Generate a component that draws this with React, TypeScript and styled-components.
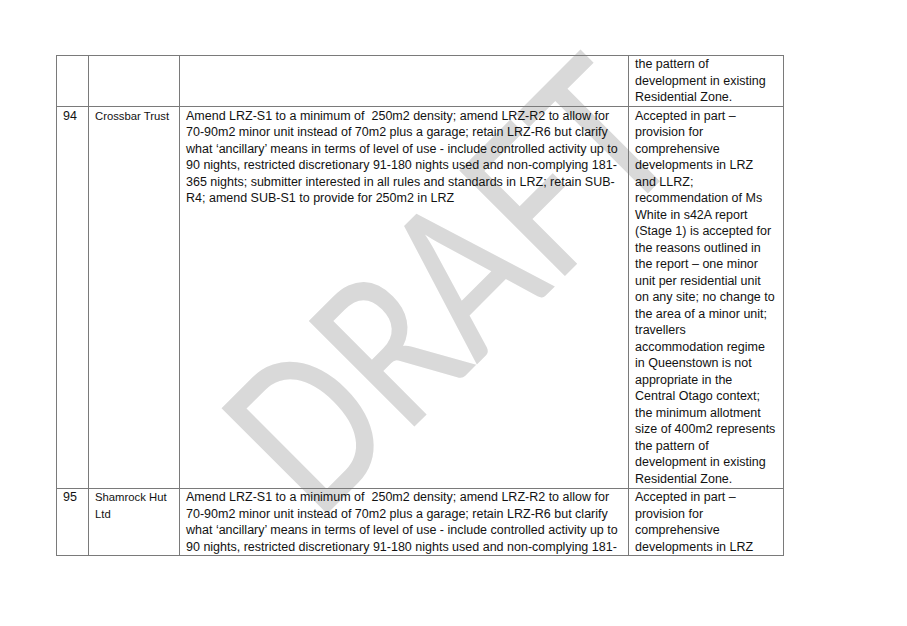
import React from "react";
import styled, { createGlobalStyle } from "styled-components";

const LINE = "#7a7a7a";

const GlobalStyle = createGlobalStyle`
  html, body {
    margin: 0;
    padding: 0;
    background: #ffffff;
  }
`;

const Page = styled.div`
  position: relative;
  width: 907px;
  height: 626px;
  box-sizing: border-box;
  padding: 55px 0 0 56px;
  overflow: hidden;
  background: #ffffff;
`;

// the grey DRAFT stamp lies under the table text, squeezed like a WordArt watermark
const Watermark = styled.div`
  position: absolute;
  left: 187px;
  top: 394px;
  transform-origin: 0 0;
  transform: rotate(-45deg) scaleX(0.78);
  font-family: Lato, "Open Sans", sans-serif;
  font-weight: 500;
  font-size: 208px;
  line-height: 1;
  color: #d9d9d9;
  white-space: nowrap;
  pointer-events: none;
  user-select: none;
`;

const Sheet = styled.div`
  position: relative;
  z-index: 1;
  display: grid;
  grid-template-columns: 32px 91px 449px 155px;
  width: 727px;
  border-top: 1px solid ${LINE};
  border-left: 1px solid ${LINE};
`;

const Cell = styled.div<{ $size?: number; $pad?: string }>`
  box-sizing: border-box;
  padding: ${p => p.$pad ?? "1px 4px 1px 6px"};
  border-right: 1px solid ${LINE};
  border-bottom: 1px solid ${LINE};
  font-family: "Liberation Sans", Arial, sans-serif;
  font-size: ${p => p.$size ?? 12.5}px;
  line-height: 16.5px;
  color: #121212;
  white-space: pre;
`;

type Row = {
  no: string;
  submitter: string[];
  request: string[];
  decision: string[];
  pad?: string;
};

const REQUEST = [
  "Amend LRZ-S1 to a minimum of  250m2 density; amend LRZ-R2 to allow for",
  "70-90m2 minor unit instead of 70m2 plus a garage; retain LRZ-R6 but clarify",
  "what \u2018ancillary\u2019 means in terms of level of use - include controlled activity up to",
  "90 nights, restricted discretionary 91-180 nights used and non-complying 181-",
  "365 nights; submitter interested in all rules and standards in LRZ; retain SUB-",
  "R4; amend SUB-S1 to provide for 250m2 in LRZ",
];

const DECISION = [
  "Accepted in part \u2013",
  "provision for",
  "comprehensive",
  "developments in LRZ",
  "and LLRZ;",
  "recommendation of Ms",
  "White in s42A report",
  "(Stage 1) is accepted for",
  "the reasons outlined in",
  "the report \u2013 one minor",
  "unit per residential unit",
  "on any site; no change to",
  "the area of a minor unit;",
  "travellers",
  "accommodation regime",
  "in Queenstown is not",
  "appropriate in the",
  "Central Otago context;",
  "the minimum allotment",
  "size of 400m2 represents",
  "the pattern of",
  "development in existing",
  "Residential Zone.",
];

const rows: Row[] = [
  {
    no: "",
    submitter: [],
    request: [],
    decision: DECISION.slice(20),
    pad: "0 4px 0 6px",
  },
  {
    no: "94",
    submitter: ["Crossbar Trust"],
    request: REQUEST,
    decision: DECISION,
  },
  {
    no: "95",
    submitter: ["Shamrock Hut", "Ltd"],
    request: REQUEST.slice(0, 4),
    decision: DECISION.slice(0, 4),
    pad: "0 4px 0 6px",
  },
];

const Lines = ({ lines }: { lines: string[] }) => (
  <>
    {lines.map((l, i) => (
      <React.Fragment key={i}>
        {i > 0 && <br />}
        {l}
      </React.Fragment>
    ))}
  </>
);

export default function App() {
  return (
    <Page>
      <GlobalStyle />
      <Watermark>DRAFT</Watermark>
      <Sheet>
        {rows.map((r, i) => (
          <React.Fragment key={i}>
            <Cell $pad={r.pad}>{r.no}</Cell>
            <Cell $pad={r.pad} $size={11.3}>
              <Lines lines={r.submitter} />
            </Cell>
            <Cell $pad={r.pad}>
              <Lines lines={r.request} />
            </Cell>
            <Cell $pad={r.pad}>
              <Lines lines={r.decision} />
            </Cell>
          </React.Fragment>
        ))}
      </Sheet>
    </Page>
  );
}
